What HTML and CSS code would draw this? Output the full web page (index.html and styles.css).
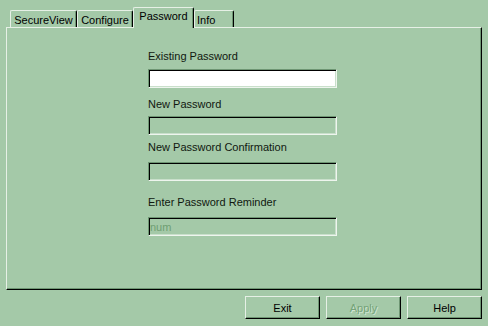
FILE: index.html
```html
<!DOCTYPE html>
<html lang="en">
<head>
    <meta charset="UTF-8">
    <title>SecureView - Password</title>
    <link rel="stylesheet" href="styles.css">
</head>
<body>
    <div class="window">
        <div class="tabs">
            <div class="tab tab-secureview">SecureView</div>
            <div class="tab tab-configure">Configure</div>
            <div class="tab tab-password active">Password</div>
            <div class="tab tab-info">Info</div>
        </div>

        <div class="panel">
            <div class="field field-existing">
                <label for="existing">Existing Password</label>
                <input type="password" id="existing">
            </div>
            <div class="field field-new">
                <label for="newpw">New Password</label>
                <input type="password" id="newpw" disabled>
            </div>
            <div class="field field-confirm">
                <label for="confirm">New Password Confirmation</label>
                <input type="password" id="confirm" disabled>
            </div>
            <div class="field field-reminder">
                <label for="reminder">Enter Password Reminder</label>
                <input type="text" id="reminder" value="num" disabled>
            </div>
        </div>

        <div class="buttons">
            <button class="btn">Exit</button>
            <button class="btn" disabled>Apply</button>
            <button class="btn">Help</button>
        </div>
    </div>
</body>
</html>
```

FILE: styles.css
```css
body {
    margin: 0;
    background-color: #a4c9a8;
    font-family: "Liberation Sans", Arial, sans-serif;
    font-size: 11px;
    color: #000;
}

.window {
    padding: 7px 0 0 6px;
    width: 476px;
}

/* tab strip */
.tabs {
    display: flex;
    align-items: flex-end;
    height: 20px;
    padding-left: 4px;
}

.tab {
    box-sizing: border-box;
    height: 17px;
    padding-top: 2px;
    text-align: center;
    line-height: 14px;
    border-top: 1px solid #e6f0e6;
    border-left: 1px solid #e6f0e6;
    border-right: 1px solid #000;
    border-radius: 2px 2px 0 0;
    box-shadow: inset -1px 0 0 #6e9673;
}

.tab-secureview { width: 67px; }
.tab-configure  { width: 56px; }
.tab-password   { width: 61px; }
.tab-info       { width: 40px; text-align: left; padding-left: 2px; }

.tab.active {
    position: relative;
    z-index: 1;
    height: 21px;
    margin-bottom: -1px;
    padding-top: 1px;
    background: #a4c9a8;
}

/* main panel */
.panel {
    box-sizing: border-box;
    height: 263px;
    padding: 21px 0 0 141px;
    border: 1px solid;
    border-color: #e6f0e6 #000 #000 #e6f0e6;
    box-shadow: inset -1px -1px 0 #6e9673;
}

.field label {
    display: block;
    line-height: 14px;
    color: #10180f;
}

.field input {
    display: block;
    box-sizing: border-box;
    width: 189px;
    height: 19px;
    margin: 0;
    padding: 0 0 0 1px;
    font-family: inherit;
    font-size: 11px;
    background: #fff;
    border: 1px solid;
    border-color: #6e9673 #eef5ee #eef5ee #6e9673;
    box-shadow: inset 1px 1px 0 #000, inset -1px -1px 0 #c9dfcb;
    outline: none;
}

.field input:disabled {
    background: #a4c9a8;
    color: #6f9f73;
}

.field-existing input { margin-top: 6px; }
.field-new { margin-top: 9px; }
.field-new input { margin-top: 5px; }
.field-confirm { margin-top: 5px; }
.field-confirm input { margin-top: 8px; }
.field-reminder { margin-top: 14px; }
.field-reminder input { margin-top: 8px; }

/* bottom buttons */
.buttons {
    display: flex;
    justify-content: flex-end;
    gap: 6px;
    margin-top: 6px;
}

.btn {
    box-sizing: border-box;
    width: 75px;
    height: 23px;
    padding: 0;
    font-family: inherit;
    font-size: 11px;
    color: #000;
    background: #a4c9a8;
    border: 1px solid;
    border-color: #e6f0e6 #000 #000 #e6f0e6;
    box-shadow: inset -1px -1px 0 #6e9673;
}

.btn:disabled {
    color: #74a378;
    text-shadow: 1px 1px 0 #d2e5d3;
}
```
